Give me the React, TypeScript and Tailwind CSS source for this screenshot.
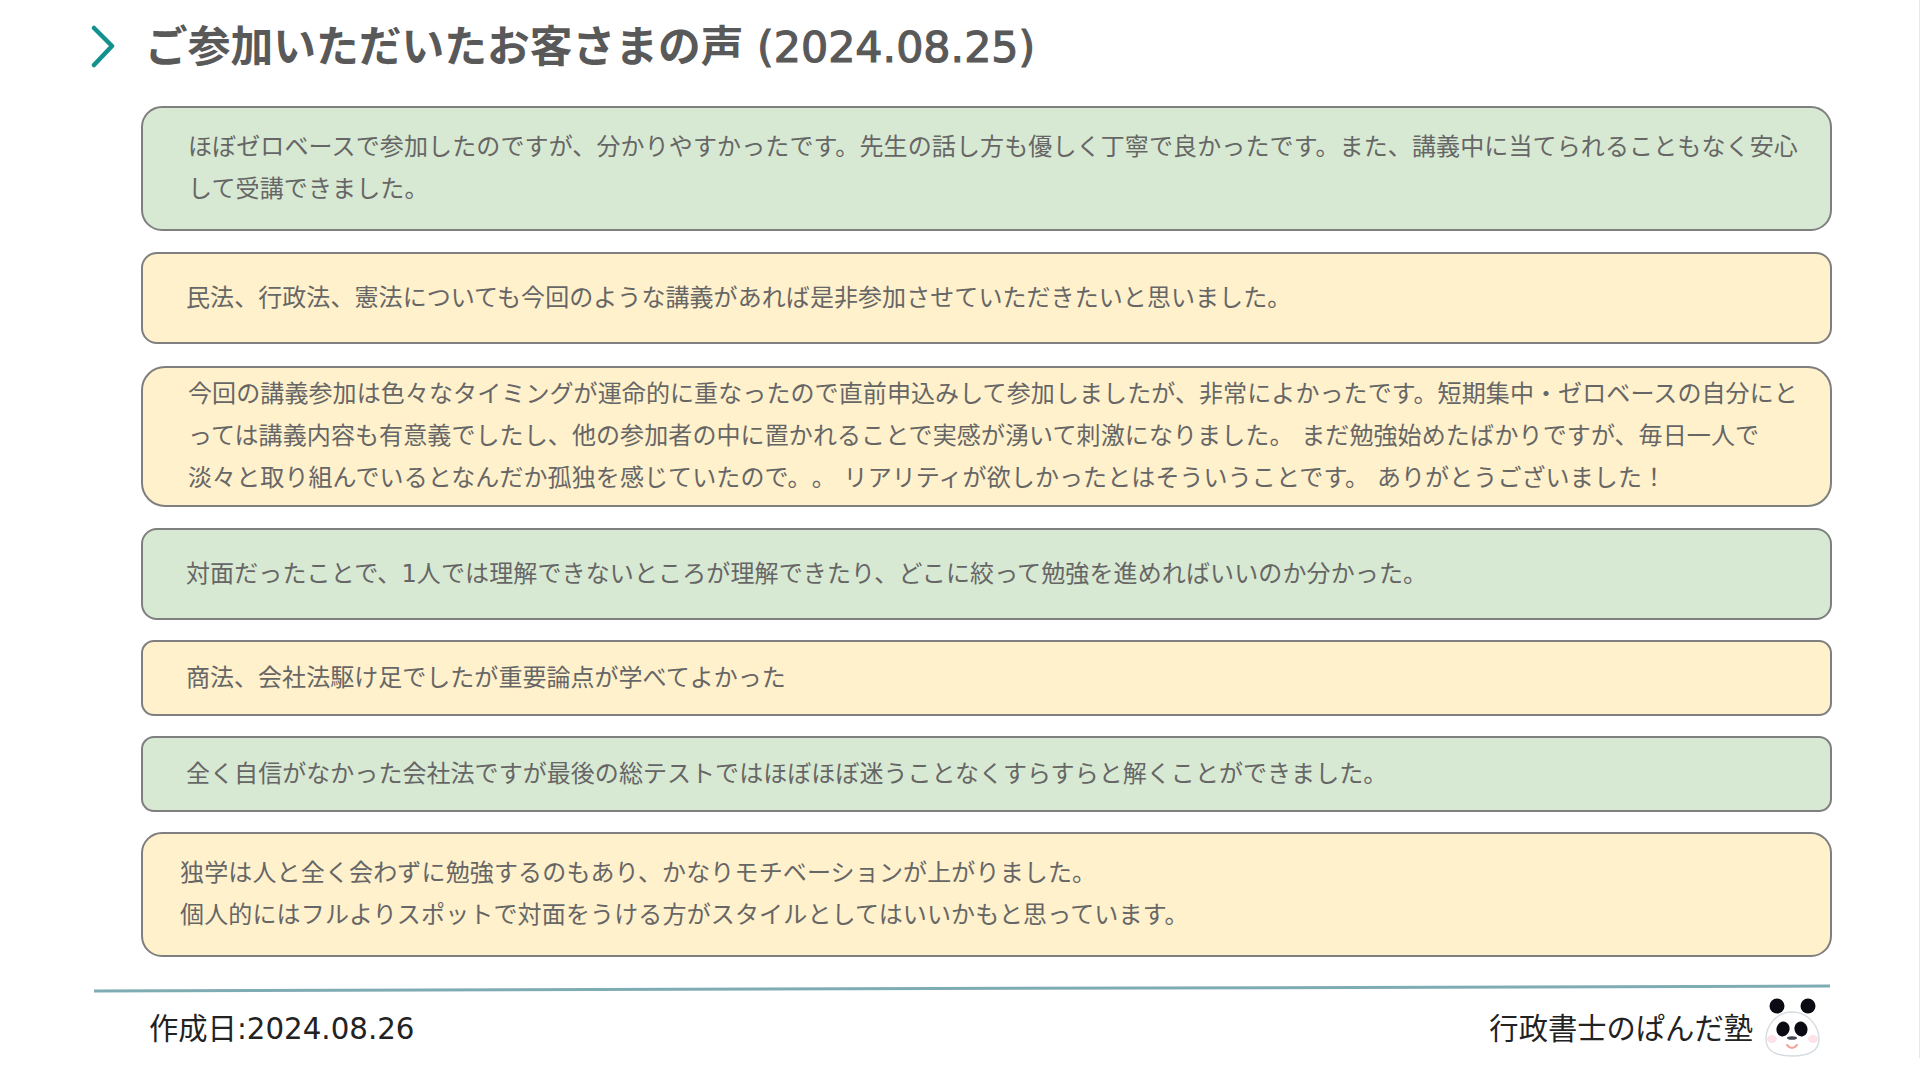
import React from 'react';

const FONT = "font-['DejaVu_Sans','Noto_Sans_CJK_JP',sans-serif]";

interface Voice {
  lines: string[];
  color: string;
  height: string;
  radius: string;
  indent: string;
  gap: string;
  tracking: string;
}

const voices: Voice[] = [
  {
    lines: [
      'ほぼゼロベースで参加したのですが、分かりやすかったです。先生の話し方も優しく丁寧で良かったです。また、講義中に当てられることもなく安心',
      'して受講できました。',
    ],
    color: 'bg-[#d8e9d3]',
    height: 'h-[125px]',
    radius: 'rounded-[21px]',
    indent: 'pl-[45px]',
    gap: 'mt-0',
    tracking: 'tracking-[0.125px]',
  },
  {
    lines: ['民法、行政法、憲法についても今回のような講義があれば是非参加させていただきたいと思いました。'],
    color: 'bg-[#fff1cc]',
    height: 'h-[92px]',
    radius: 'rounded-[16px]',
    indent: 'pl-[43px]',
    gap: 'mt-[21px]',
    tracking: 'tracking-[0.07px]',
  },
  {
    lines: [
      '今回の講義参加は色々なタイミングが運命的に重なったので直前申込みして参加しましたが、非常によかったです。短期集中・ゼロベースの自分にと',
      'っては講義内容も有意義でしたし、他の参加者の中に置かれることで実感が湧いて刺激になりました。 まだ勉強始めたばかりですが、毎日一人で',
      '淡々と取り組んでいるとなんだか孤独を感じていたので。。 リアリティが欲しかったとはそういうことです。 ありがとうございました！',
    ],
    color: 'bg-[#fff1cc]',
    height: 'h-[141px]',
    radius: 'rounded-[24px]',
    indent: 'pl-[45px]',
    gap: 'mt-[22px]',
    tracking: 'tracking-[0.1px]',
  },
  {
    lines: ['対面だったことで、1人では理解できないところが理解できたり、どこに絞って勉強を進めればいいのか分かった。'],
    color: 'bg-[#d8e9d3]',
    height: 'h-[92px]',
    radius: 'rounded-[16px]',
    indent: 'pl-[43px]',
    gap: 'mt-[21px]',
    tracking: 'tracking-[0.125px]',
  },
  {
    lines: ['商法、会社法駆け足でしたが重要論点が学べてよかった'],
    color: 'bg-[#fff1cc]',
    height: 'h-[76px]',
    radius: 'rounded-[13px]',
    indent: 'pl-[43px]',
    gap: 'mt-[20px]',
    tracking: 'tracking-[0.03px]',
  },
  {
    lines: ['全く自信がなかった会社法ですが最後の総テストではほぼほぼ迷うことなくすらすらと解くことができました。'],
    color: 'bg-[#d8e9d3]',
    height: 'h-[76px]',
    radius: 'rounded-[13px]',
    indent: 'pl-[43px]',
    gap: 'mt-[20px]',
    tracking: 'tracking-[0.05px]',
  },
  {
    lines: [
      '独学は人と全く会わずに勉強するのもあり、かなりモチベーションが上がりました。',
      '個人的にはフルよりスポットで対面をうける方がスタイルとしてはいいかもと思っています。',
    ],
    color: 'bg-[#fff1cc]',
    height: 'h-[125px]',
    radius: 'rounded-[21px]',
    indent: 'pl-[37px]',
    gap: 'mt-[20px]',
    tracking: 'tracking-[0.15px]',
  },
];

const PandaLogo = () => (
  <svg width="58" height="62" viewBox="0 0 58 62" className="shrink-0">
    <circle cx="13" cy="9" r="7.5" fill="#0c0a12" />
    <circle cx="44" cy="9" r="7.5" fill="#0c0a12" />
    <path
      d="M28 15 C44 15 55 29 55 42 C55 54 44 59 28 59 C12 59 2 54 2 42 C2 29 12 15 28 15 Z"
      fill="#fff"
      stroke="#d5dbe0"
      strokeWidth="1.4"
    />
    <ellipse cx="19" cy="32" rx="6.5" ry="7.5" fill="#0c0a12" transform="rotate(15 19 32)" />
    <ellipse cx="37" cy="32" rx="6.5" ry="7.5" fill="#0c0a12" transform="rotate(-15 37 32)" />
    <ellipse cx="8" cy="42" rx="5" ry="4" fill="#fde2e8" />
    <ellipse cx="49" cy="42" rx="5" ry="4" fill="#fde2e8" />
    <ellipse cx="28" cy="41" rx="5" ry="1.8" fill="#45474c" />
    <path d="M23 48 Q28 54 33 48" fill="none" stroke="#f5a49b" strokeWidth="2" strokeLinecap="round" />
  </svg>
);

export default function App() {
  return (
    <div className={`${FONT} w-[1920px] h-[1080px] bg-white overflow-hidden`}>
      <div className="h-[1058px] border-r border-[#e6e8f0]">
        <div className="flex items-center h-[92px] pl-[90px]">
          <svg width="28" height="44" viewBox="0 0 28 44" className="shrink-0">
            <path d="M4 4 L22 22 L4 41" fill="none" stroke="#13918f" strokeWidth="4.5" strokeLinecap="round" strokeLinejoin="round" />
          </svg>
          <h1 className="ml-[27px] pt-[2px] text-[42.75px] leading-none font-bold text-[#595959] whitespace-nowrap">
            ご参加いただいたお客さまの声
            <span className="font-normal [-webkit-text-stroke:1.2px_#595959]"> (2024.08.25)</span>
          </h1>
        </div>

        <div className="flex flex-col mt-[14px] ml-[141px] w-[1691px]">
          {voices.map((voice) => (
            <div
              key={voice.lines[0]}
              className={`flex flex-col justify-center pb-[1px] border-2 border-[#7f7f7f] ${voice.color} ${voice.height} ${voice.radius} ${voice.indent} ${voice.gap}`}
            >
              {voice.lines.map((line) => (
                <p
                  key={line}
                  className={`text-[24px] leading-[42px] text-[#666666] whitespace-nowrap [text-spacing-trim:space-all] ${voice.tracking}`}
                >
                  {line}
                </p>
              ))}
            </div>
          ))}
        </div>

        <div className="mt-[30px] ml-[94px] w-[1736px] h-[3px] bg-[#7fabb3] -rotate-[0.16deg]" />

        <div className="flex items-center justify-between mt-[7px] ml-[149px] w-[1673px] text-[29.3px] text-[#222222]">
          <span className="pt-[3px]">作成日:2024.08.26</span>
          <div className="flex items-center gap-[11px]">
            <span className="pt-[3px]">行政書士のぱんだ塾</span>
            <PandaLogo />
          </div>
        </div>
      </div>
    </div>
  );
}
